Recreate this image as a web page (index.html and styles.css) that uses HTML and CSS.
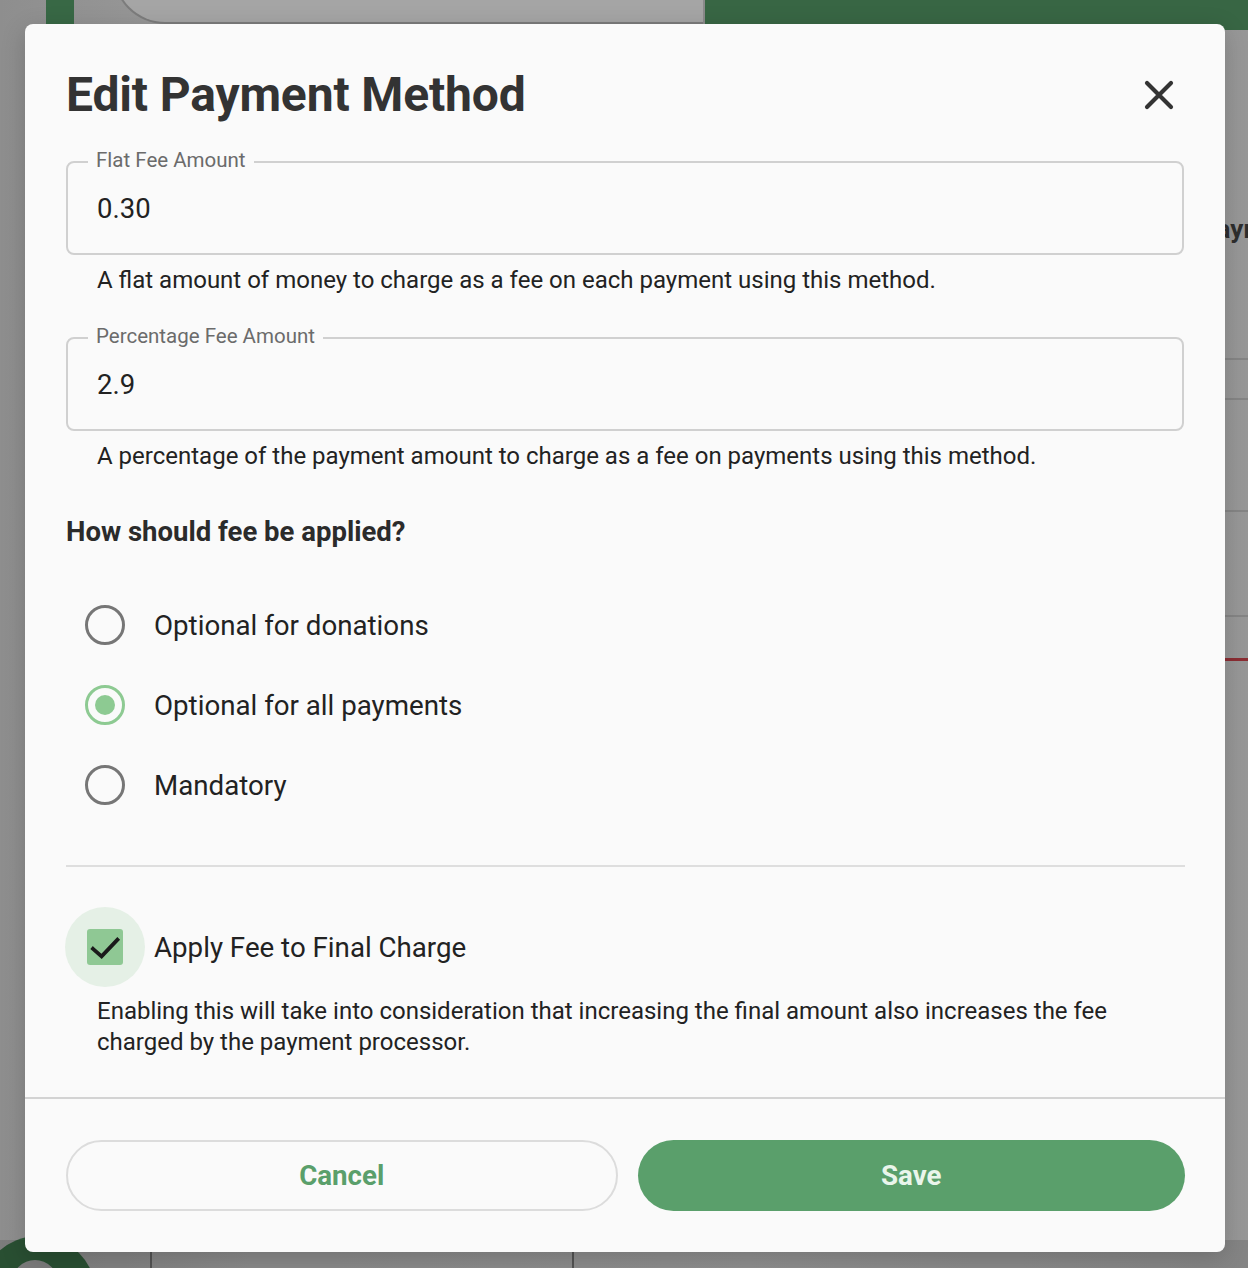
FILE: index.html
```html
<!DOCTYPE html>
<html lang="en">
<head>
<meta charset="utf-8">
<title>Edit Payment Method</title>
<link rel="stylesheet" href="styles.css">
</head>
<body>
<div class="backdrop">
  <div class="bg-sidebar"></div>
  <div class="bg-card"></div>
  <div class="bg-header"></div>
  <div class="bg-title">Payment Methods</div>
  <div class="bg-line l1"></div>
  <div class="bg-line l2"></div>
  <div class="bg-line l3"></div>
  <div class="bg-line l4"></div>
  <div class="bg-line red"></div>
  <div class="bg-fab"><span></span></div>
  <div class="bg-vline v1"></div>
  <div class="bg-vline v2"></div>
</div>

<div class="overlay">
  <div class="modal" role="dialog" aria-labelledby="dlg-title">
    <div class="modal-body">
      <div class="modal-head">
        <h1 id="dlg-title" class="modal-title">Edit Payment Method</h1>
        <button class="close-btn" aria-label="Close">
          <svg width="30" height="30" viewBox="0 0 30 30"><path d="M3 3 L27 27 M27 3 L3 27" stroke="#333" stroke-width="4.2" stroke-linecap="round" fill="none"/></svg>
        </button>
      </div>

      <div class="field">
        <span class="field-label">Flat Fee Amount</span>
        <span class="field-value">0.30</span>
      </div>
      <p class="helper">A flat amount of money to charge as a fee on each payment using this method.</p>

      <div class="field second">
        <span class="field-label">Percentage Fee Amount</span>
        <span class="field-value">2.9</span>
      </div>
      <p class="helper">A percentage of the payment amount to charge as a fee on payments using this method.</p>

      <h2 class="section-title">How should fee be applied?</h2>

      <div class="radio-group">
        <div class="radio-row"><span class="radio"></span><span class="radio-label">Optional for donations</span></div>
        <div class="radio-row"><span class="radio checked"></span><span class="radio-label">Optional for all payments</span></div>
        <div class="radio-row"><span class="radio"></span><span class="radio-label">Mandatory</span></div>
      </div>

      <hr class="divider">

      <div class="check-row">
        <span class="check-halo">
          <span class="check-box">
            <svg width="36" height="36" viewBox="0 0 36 36"><path d="M6 19.8 L14.6 27.4 L30.4 10.8" stroke="#1a1a1a" stroke-width="3.8" fill="none" stroke-linecap="square" stroke-linejoin="miter"/></svg>
          </span>
        </span>
        <span class="check-label">Apply Fee to Final Charge</span>
      </div>
      <p class="check-desc">Enabling this will take into consideration that increasing the final amount also increases the fee charged by the payment processor.</p>
    </div>

    <div class="modal-foot">
      <button class="btn btn-cancel">Cancel</button>
      <button class="btn btn-save">Save</button>
    </div>
  </div>
</div>
</body>
</html>
```

FILE: styles.css
```css
*, *::before, *::after { box-sizing: border-box; }

html, body {
  margin: 0;
  padding: 0;
  width: 1248px;
  height: 1268px;
  overflow: hidden;
}

body {
  font-family: Roboto, "Liberation Sans", Arial, sans-serif;
  background: linear-gradient(90deg, #8e8e8e 0%, #9c9c9c 20%, #a2a2a2 60%, #979797 100%);
  position: relative;
}

/* ---------- dimmed page underneath ---------- */
.backdrop {
  position: absolute;
  inset: 0;
  overflow: hidden;
}
.bg-sidebar {
  position: absolute;
  left: 46px; top: 0;
  width: 28px; height: 30px;
  background: #386845;
}
.bg-card {
  position: absolute;
  left: 113px; top: -100px;
  width: 620px; height: 124px;
  border: 2px solid #7c7c7c;
  border-top: 0;
  border-radius: 0 0 0 52px;
  background: #a5a5a5;
}
.bg-header {
  position: absolute;
  left: 703px; top: 0;
  width: 545px; height: 30px;
  background: #386644;
  border-left: 2px solid #8a8a8a;
}
.bg-title {
  position: absolute;
  left: 1200px; top: 214px;
  font-size: 26px;
  font-weight: 700;
  color: #2e2e2e;
  white-space: nowrap;
}
.bg-line {
  position: absolute;
  left: 1225px; right: 0;
  height: 2px;
  background: #858585;
}
.bg-line.l1 { top: 358px; }
.bg-line.l2 { top: 398px; }
.bg-line.l3 { top: 510px; }
.bg-line.l4 { top: 615px; }
.bg-line.red { top: 658px; height: 3px; background: #8b2d33; }
.bg-fab {
  position: absolute;
  left: -20px; top: 1236px;
  width: 116px; height: 116px;
  border-radius: 50%;
  background: #2f5a3a;
}
.bg-fab span {
  position: absolute;
  left: 32px; top: 24px;
  width: 46px; height: 46px;
  border-radius: 50%;
  background: #8d8d8d;
}
.bg-vline {
  position: absolute;
  top: 1240px; bottom: 0;
  width: 2px;
  background: #5f5f5f;
}
.bg-vline.v1 { left: 150px; }
.bg-vline.v2 { left: 572px; }
.backdrop::after {
  content: "";
  position: absolute;
  left: 0; right: 0; top: 1240px; bottom: 0;
  background: rgba(0,0,0,0.12);
}

/* ---------- modal ---------- */
.overlay {
  position: absolute;
  inset: 0;
  padding: 24px 23px 16px 25px;
  z-index: 2;
}
.modal {
  width: 1200px;
  height: 1228px;
  background: #fafafa;
  border-radius: 8px;
  display: flex;
  flex-direction: column;
  box-shadow: 0 6px 24px rgba(0,0,0,0.18);
}
.modal-body {
  flex: 1;
  padding: 40px 40px 0 40px;
}
.modal-head {
  display: flex;
  align-items: center;
  justify-content: space-between;
  height: 62px;
  margin-bottom: 35px;
}
.modal-title {
  margin: 0 0 0 1px;
  font-size: 48px;
  font-weight: 700;
  color: #333333;
  line-height: 62px;
  letter-spacing: -0.15px;
}
.close-btn {
  border: 0;
  background: transparent;
  padding: 0;
  margin-right: 11px;
  width: 30px;
  height: 30px;
  display: flex;
  cursor: pointer;
}

.field {
  position: relative;
  height: 94px;
  border: 2px solid #d0d0d0;
  border-radius: 8px;
  margin-left: 1px;
  margin-right: 1px;
  display: flex;
  align-items: center;
  padding: 0 29px;
}
.field.second { margin-top: 43px; }
.field-label {
  position: absolute;
  left: 20px;
  top: -15px;
  padding: 0 8px;
  background: #fafafa;
  font-size: 20.5px;
  line-height: 24px;
  color: #6b6b6b;
}
.field-value {
  font-size: 27.5px;
  color: #222;
  line-height: 32px;
  padding-top: 2px;
}
.helper {
  margin: 11px 0 0 32px;
  font-size: 24px;
  line-height: 28px;
  color: #222;
}

.section-title {
  margin: 46px 0 0 1px;
  font-size: 27.5px;
  line-height: 32px;
  font-weight: 700;
  color: #2b2b2b;
}

.radio-group {
  margin-top: 37px;
  display: flex;
  flex-direction: column;
}
.radio-row {
  height: 80px;
  display: flex;
  align-items: center;
}
.radio {
  width: 80px;
  height: 80px;
  display: flex;
  align-items: center;
  justify-content: center;
  position: relative;
}
.radio::before {
  content: "";
  width: 40px;
  height: 40px;
  border-radius: 50%;
  border: 3.5px solid #767676;
}
.radio.checked::before {
  border-color: #8dca92;
}
.radio.checked::after {
  content: "";
  position: absolute;
  left: 30px; top: 30px;
  width: 20px; height: 20px;
  border-radius: 50%;
  background: #8dca92;
}
.radio-label {
  margin-left: 9px;
  font-size: 27.7px;
  color: #222;
}

.divider {
  margin: 40px 0 0 1px;
  border: 0;
  border-top: 2px solid #dedede;
}

.check-row {
  margin-top: 40px;
  display: flex;
  align-items: center;
}
.check-halo {
  width: 80px;
  height: 80px;
  border-radius: 50%;
  background: #e5f0e6;
  display: flex;
  align-items: center;
  justify-content: center;
}
.check-box {
  width: 36px;
  height: 36px;
  border-radius: 3px;
  background: #8fc894;
  display: flex;
}
.check-label {
  margin-left: 9px;
  font-size: 27.7px;
  color: #222;
}
.check-desc {
  margin: 9px 40px 0 32px;
  font-size: 24px;
  line-height: 31px;
  color: #222;
}

.modal-foot {
  border-top: 2px solid #d3d3d3;
  padding: 41px 40px 41px 40px;
  display: flex;
  gap: 20px;
}
.btn {
  flex: 1 1 0;
  min-width: 0;
  height: 71px;
  border-radius: 36px;
  font-family: Roboto, "Liberation Sans", Arial, sans-serif;
  font-size: 27.7px;
  font-weight: 700;
  cursor: pointer;
}
.btn-cancel {
  background: #fafafa;
  border: 2px solid #dcdcdc;
  color: #5a9f6b;
  margin-left: 1px;
}
.btn-save {
  background: #5a9f6b;
  border: 0;
  color: #e9f5eb;
}
```
